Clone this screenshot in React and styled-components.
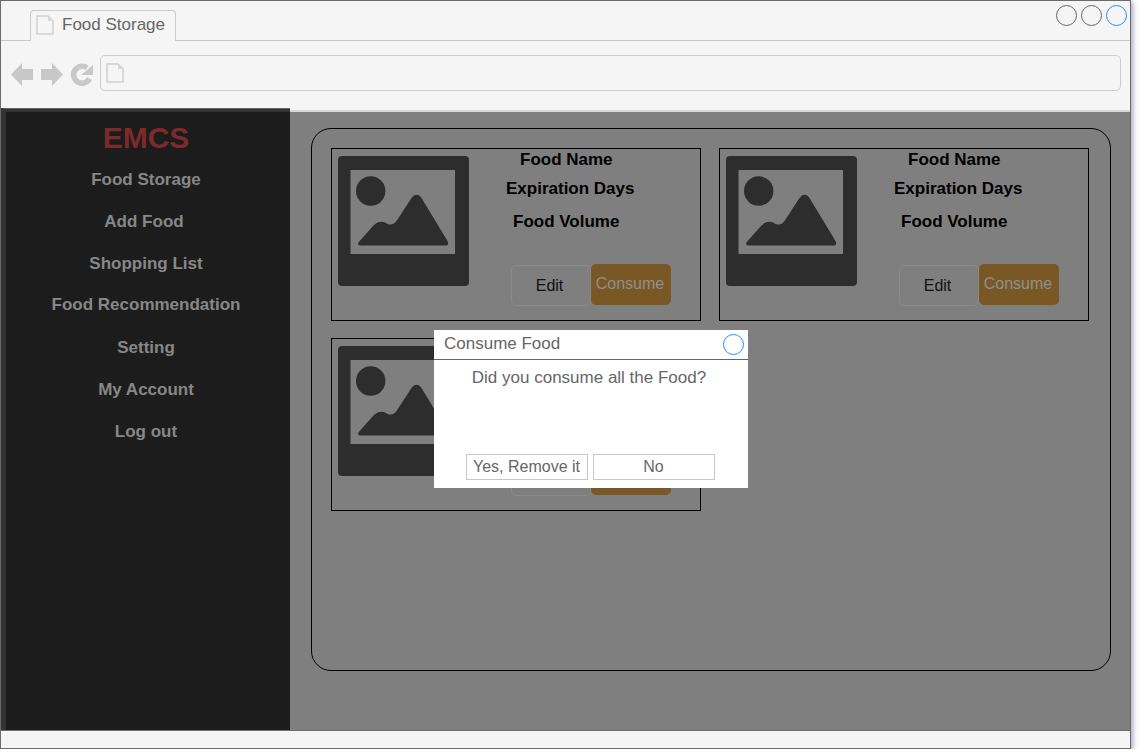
import React from "react";
import styled, { createGlobalStyle } from "styled-components";

const Global = createGlobalStyle`
  html, body { margin: 0; padding: 0; background: #fff; }
  * { box-sizing: border-box; }
  body { font-family: "Liberation Sans", Arial, sans-serif; }
`;

const Window = styled.div`
  position: relative;
  width: 1131px;
  height: 749px;
  display: flex;
  flex-direction: column;
  background: #f5f5f5;
  border: 1px solid #6b6b6b;
  box-shadow: 2px 2px 5px rgba(90, 90, 150, 0.55);
`;

const TabBar = styled.div`
  height: 40px;
  flex: none;
  display: flex;
  align-items: flex-end;
  justify-content: space-between;
  padding-left: 29px;
  border-bottom: 1px solid #c8c8c8;
`;

const Tab = styled.div`
  width: 146px;
  height: 31px;
  margin-bottom: -1px;
  display: flex;
  align-items: center;
  gap: 8px;
  padding: 0 0 3px 5px;
  background: #f5f5f5;
  border: 1px solid #cccccc;
  border-bottom: none;
  border-radius: 4px 4px 0 0;
  color: #666;
  font-size: 17px;
`;

const WindowControls = styled.div`
  align-self: flex-start;
  display: flex;
  gap: 4px;
  margin: 4px 3px 0 0;
`;

const Circle = styled.div`
  width: 21px;
  height: 21px;
  border-radius: 50%;
  border: 1px solid ${(p) => (p.$active ? "#1e90ff" : "#666")};
`;

const Toolbar = styled.div`
  height: 71px;
  flex: none;
  display: flex;
  align-items: flex-start;
  gap: 2px;
  padding: 14px 9px 0 9px;
  background: #f5f5f5;
  border-bottom: 2px solid #d8d8d8;
`;

const NavIcons = styled.div`
  width: 88px;
  height: 36px;
  flex: none;
  display: flex;
  align-items: center;
`;

const AddressBar = styled.div`
  flex: 1;
  height: 36px;
  display: flex;
  align-items: center;
  padding-left: 5px;
  border: 1px solid #cccccc;
  border-radius: 5px;
`;

const Content = styled.div`
  flex: 1;
  display: flex;
  min-height: 0;
  background: #7f7f7f;
`;

const Sidebar = styled.aside`
  width: 289px;
  flex: none;
  margin-top: -4px;
  padding: 0 4px 0 0;
  display: flex;
  flex-direction: column;
  align-items: center;
  background: #1c1c1c;
  border-left: 5px solid #333;
  border-top: 1px solid #666;
  box-shadow: inset 0 3px 0 #333;
`;

const Brand = styled.h1`
  margin: 12px 0 0;
  font-size: 30px;
  line-height: 34px;
  font-weight: 700;
  color: #7f2a2a;
`;

const Nav = styled.nav`
  margin-top: 4px;
  display: flex;
  flex-direction: column;
  align-items: center;
`;

const NavItem = styled.div`
  height: 42px;
  line-height: 42px;
  font-size: 17px;
  font-weight: 700;
  color: #878787;
  transform: translate(${(p) => p.$shift || 0}px, ${(p) => p.$lift || 0}px);
`;

const Main = styled.main`
  flex: 1;
  padding: 16px 20px 0 21px;
`;

const Panel = styled.section`
  width: 800px;
  height: 543px;
  padding: 19px 0 0 19px;
  display: grid;
  grid-template-columns: 370px 370px;
  grid-auto-rows: 173px;
  column-gap: 18px;
  row-gap: 17px;
  align-content: start;
  border: 1px solid #000;
  border-radius: 20px;
`;

const Card = styled.article`
  display: flex;
  height: 173px;
  padding-left: 6px;
  border: 1px solid #000;
`;

const Thumb = styled.svg`
  width: 131px;
  height: 130px;
  flex: none;
  margin-top: 7px;
`;

const Info = styled.div`
  width: 220px;
  display: flex;
  flex-direction: column;
  margin-left: 11px;
  padding-top: 1px;
`;

const Label = styled.div`
  height: ${(p) => p.$h}px;
  line-height: ${(p) => p.$h}px;
  padding-left: ${(p) => p.$left}px;
  color: #000;
  font-size: 17px;
  font-weight: 700;
  white-space: nowrap;
`;

const Actions = styled.div`
  display: flex;
  margin: 28px 0 0 31px;
`;

const EditButton = styled.div`
  width: 80px;
  height: 41px;
  display: flex;
  align-items: center;
  justify-content: center;
  margin-top: 1px;
  padding-right: 3px;
  border: 1px solid #8a8a8a;
  border-radius: 5px;
  color: #111;
  font-size: 16px;
`;

const ConsumeButton = styled.div`
  width: 80px;
  height: 41px;
  display: flex;
  align-items: center;
  justify-content: center;
  padding: 0 2px 2px 0;
  background: #7a5825;
  border-radius: 5px;
  color: #8f8f8f;
  font-size: 16px;
`;

const Footer = styled.div`
  height: 18px;
  flex: none;
  background: #f5f5f5;
  border-top: 1px solid #6f6f6f;
`;

const Modal = styled.div`
  position: absolute;
  left: 433px;
  top: 329px;
  width: 314px;
  height: 158px;
  display: flex;
  flex-direction: column;
  background: #fff;
  color: #666;
  font-size: 16px;
`;

const ModalHeader = styled.div`
  height: 30px;
  flex: none;
  display: flex;
  align-items: center;
  justify-content: space-between;
  padding: 0 4px 0 10px;
  border-bottom: 1px solid #666;
  font-size: 17px;
`;

const ModalTitle = styled.span`
  margin-bottom: 2px;
`;

const ModalBody = styled.p`
  flex: 1;
  margin: 0;
  padding-top: 9px;
  padding-right: 4px;
  line-height: 18px;
  font-size: 17px;
  text-align: center;
`;

const ModalActions = styled.div`
  display: flex;
  gap: 5px;
  padding: 0 0 8px 32px;
`;

const ModalButton = styled.div`
  width: 122px;
  height: 26px;
  display: flex;
  align-items: center;
  justify-content: center;
  padding-right: 1px;
  border: 1px solid #c8c8c8;
  white-space: nowrap;
`;

const PlaceholderImage = () => (
  <Thumb viewBox="0 0 131 130">
    <path
      fillRule="evenodd"
      fill="#2d2d2d"
      d="M4 0H127a4 4 0 0 1 4 4V126a4 4 0 0 1-4 4H4a4 4 0 0 1-4-4V4a4 4 0 0 1 4-4ZM12.500 14V98H117V14Z"
    />
    <circle cx="32.700" cy="35" r="14.700" fill="#2d2d2d" />
    <path
      fill="#2d2d2d"
      d="M22 89.500C20 89.500 19.500 87.500 21 85.800L35 70C39 65.500 44 64.500 48 67C52 69.500 55.500 69 58.500 65L73.500 42C76.500 37.500 81 37.500 83.500 42L109.500 85C111 87.500 110 89.500 107.500 89.500Z"
    />
  </Thumb>
);

const DocIcon = () => (
  <svg width="18" height="20" viewBox="0 0 18 20">
    <path d="M1 1H12L17 6V19H1Z" fill="none" stroke="#d0d0d0" strokeWidth="1.500" />
    <path d="M12 1V6H17" fill="#d8d8d8" />
  </svg>
);

const ToolbarIcons = () => (
  <svg width="88" height="36" viewBox="0 0 88 36">
    <path fill="#c8c8c8" d="M1 19.500L12 8V14H23V25H12V31Z" />
    <path fill="#c8c8c8" d="M53 19.500L42 8V14H31V25H42V31Z" />
    <path
      fill="none"
      stroke="#c8c8c8"
      strokeWidth="5.500"
      d="M79.500 23.500A8.400 8.400 0 1 1 77 13"
    />
    <path fill="#c8c8c8" d="M71 20L83 10V20Z" />
  </svg>
);

const foods = [0, 1, 2];

export default function App() {
  return (
    <>
      <Global />
      <Window>
        <TabBar>
          <Tab>
            <DocIcon />
            Food Storage
          </Tab>
          <WindowControls>
            <Circle />
            <Circle />
            <Circle $active />
          </WindowControls>
        </TabBar>
        <Toolbar>
          <NavIcons>
            <ToolbarIcons />
          </NavIcons>
          <AddressBar>
            <DocIcon />
          </AddressBar>
        </Toolbar>
        <Content>
          <Sidebar>
            <Brand>EMCS</Brand>
            <Nav>
              <NavItem>Food Storage</NavItem>
              <NavItem $shift={-2}>Add Food</NavItem>
              <NavItem>Shopping List</NavItem>
              <NavItem $lift={-1}>Food Recommendation</NavItem>
              <NavItem>Setting</NavItem>
              <NavItem>My Account</NavItem>
              <NavItem>Log out</NavItem>
            </Nav>
          </Sidebar>
          <Main>
            <Panel>
              {foods.map((id) => (
                <Card key={id}>
                  <PlaceholderImage />
                  <Info>
                    <Label $h={20} $left={40}>Food Name</Label>
                    <Label $h={38} $left={26}>Expiration Days</Label>
                    <Label $h={28} $left={33}>Food Volume</Label>
                    <Actions>
                      <EditButton>Edit</EditButton>
                      <ConsumeButton>Consume</ConsumeButton>
                    </Actions>
                  </Info>
                </Card>
              ))}
            </Panel>
          </Main>
        </Content>
        <Footer />
        <Modal>
          <ModalHeader>
            <ModalTitle>Consume Food</ModalTitle>
            <Circle $active />
          </ModalHeader>
          <ModalBody>Did you consume all the Food?</ModalBody>
          <ModalActions>
            <ModalButton>Yes, Remove it</ModalButton>
            <ModalButton>No</ModalButton>
          </ModalActions>
        </Modal>
      </Window>
    </>
  );
}
